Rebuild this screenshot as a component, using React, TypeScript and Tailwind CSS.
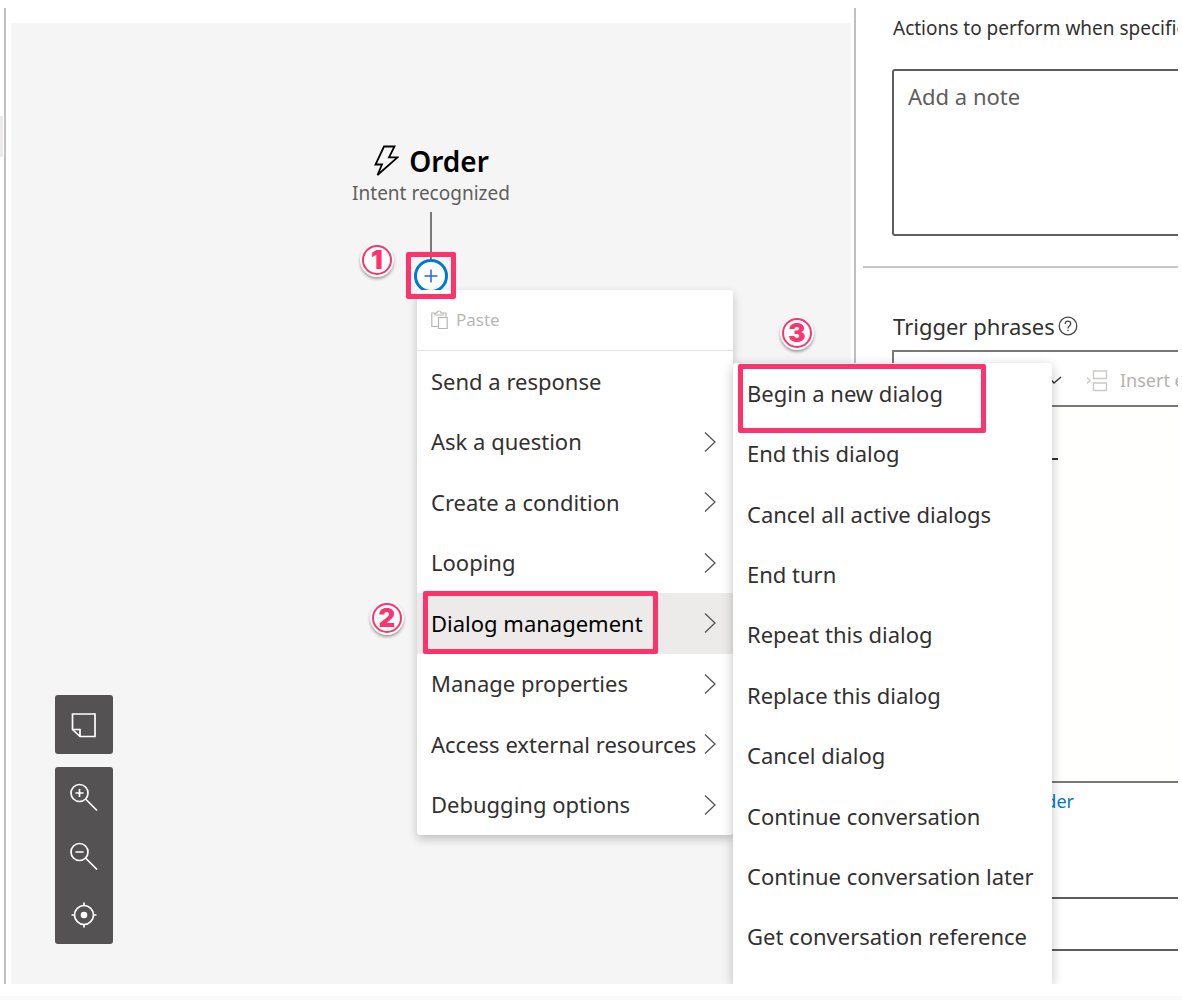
import type { ReactNode } from "react";

const menuItems: { label: string; sub?: boolean; active?: boolean }[] = [
  { label: "Send a response" },
  { label: "Ask a question", sub: true },
  { label: "Create a condition", sub: true },
  { label: "Looping", sub: true },
  { label: "Dialog management", sub: true, active: true },
  { label: "Manage properties", sub: true },
  { label: "Access external resources", sub: true },
  { label: "Debugging options", sub: true },
];

const dialogItems = [
  "Begin a new dialog",
  "End this dialog",
  "Cancel all active dialogs",
  "End turn",
  "Repeat this dialog",
  "Replace this dialog",
  "Cancel dialog",
  "Continue conversation",
  "Continue conversation later",
  "Get conversation reference",
];

function Chevron() {
  return (
    <svg className="shrink-0" width="14" height="22" viewBox="0 0 14 22" fill="none" stroke="#55534f" strokeWidth="1.3">
      <path d="M2 1.5 L12 11 L2 20.5" />
    </svg>
  );
}

function Step({ n, className }: { n: number; className: string }) {
  return (
    <div className={`absolute z-30 flex size-[34px] items-center justify-center rounded-full bg-white p-[2px] shadow-[0_2px_3px_rgba(0,0,0,0.35)] ${className}`}>
      <div className="flex size-full items-center justify-center rounded-full border-2 border-[#ff336b] font-['Inter',sans-serif] text-[26px] leading-none font-black text-[#ff336b]">
        {n}
      </div>
    </div>
  );
}

function ToolButton({ label, children }: { label: string; children: ReactNode }) {
  return (
    <button type="button" aria-label={label} className="flex h-[59px] w-full items-center justify-center">
      <svg width="30" height="30" viewBox="0 0 30 30" fill="none" stroke="#fff" strokeWidth="1.7">
        {children}
      </svg>
    </button>
  );
}

export default function App() {
  return (
    <div className="flex min-h-screen flex-col overflow-hidden bg-white font-['Noto_Sans','Segoe_UI',sans-serif] text-[#323130]">
      <main className="mt-2 mr-1 mb-3 flex flex-1 overflow-hidden">
        <div className="w-1 shrink-0 pt-[108px]">
          <div className="h-[41px] w-[3px] bg-[#edebe9]" />
        </div>
        <div className="w-[2px] shrink-0 bg-[#c0c0c0]" />

        <section aria-label="Dialog flow" className="relative z-10 mt-[15px] ml-[5px] h-[961px] min-w-[840px] flex-1 bg-[#f5f5f5]">
          <div className="absolute top-[118px] left-[320px] flex w-[200px] flex-col items-center">
            <h1 className="flex items-center gap-[10px] text-[28px] leading-10 font-semibold text-black">
              <svg width="26" height="32" viewBox="0 0 26 32" fill="none" stroke="#000" strokeWidth="1.8">
                <path d="M11 1.5 H21.5 L16 12.3 H24.5 L4.5 30 L9 19.5 H2.5 Z" />
              </svg>
              Order
            </h1>
            <p className="text-[19px] leading-6 whitespace-nowrap text-[#605e5c]">Intent recognized</p>
            <div className="mt-[7px] h-[47px] w-[2px] bg-[#7a7876]" />
            <button type="button" aria-label="Add action" className="flex size-[34px] items-center justify-center rounded-full border-3 border-[#0078d4] bg-white">
              <svg width="14" height="14" viewBox="0 0 14 14" stroke="#2266e3" strokeWidth="1.5">
                <path d="M7 0.5 V13.5 M0.5 7 H13.5" />
              </svg>
            </button>
          </div>

          <div className="absolute top-[672px] left-11 flex w-[58px] flex-col gap-[13px]">
            <div className="rounded-[3px] bg-[#545253]">
              <ToolButton label="Add note">
                <path d="M3.5 4 H26 V26.500 H11 L3.5 19.5 Z M4 19.5 H11 V26" />
              </ToolButton>
            </div>
            <div className="rounded-[3px] bg-[#545253]">
              <ToolButton label="Zoom in">
                <circle cx="10.5" cy="11" r="8.5" />
                <path d="M16.5 17 L28 28.5 M6.5 11 H14.5 M10.5 7 V15" />
              </ToolButton>
              <ToolButton label="Zoom out">
                <circle cx="10.5" cy="11" r="8.5" />
                <path d="M16.5 17 L28 28.5 M6.5 11 H14.5" />
              </ToolButton>
              <ToolButton label="Center view">
                <circle cx="15" cy="15" r="9.5" />
                <circle cx="15" cy="15" r="3.3" fill="#fff" stroke="none" />
                <path d="M15 2.5 V6 M15 24 V27.5 M2.5 15 H6 M24 15 H27.5" />
              </ToolButton>
            </div>
          </div>

          <div role="menu" aria-label="Add action" className="absolute top-[267px] left-[406px] w-[316px] rounded-[3px] bg-white shadow-[0_4px_10px_rgba(0,0,0,0.22)]">
            <button type="button" role="menuitem" disabled className="flex h-[61px] w-full items-center gap-2 border-b border-[#e1dfdd] px-[14px] text-[17px] text-[#b9b7b5]">
              <svg width="17" height="20" viewBox="0 0 17 20" fill="none" stroke="#b9b7b5" strokeWidth="1.2">
                <path d="M7 16.5 H0.8 V3 H4 M12 3 H15 V7 M4 5 V3 H6 Q6 1 8 1 Q10 1 10 3 H12 V5 Z M7.5 7.5 H16.2 V18.5 H7.5 Z" />
              </svg>
              Paste
            </button>
            <div className="flex h-[484px] flex-col">
              {menuItems.map((item) => (
                <button
                  key={item.label}
                  type="button"
                  role="menuitem"
                  className={`flex w-full flex-1 items-center justify-between pr-4 pl-[14px] text-[22px] whitespace-nowrap ${item.active ? "bg-[#edebe9] text-black" : ""}`}
                >
                  {item.label}
                  {item.sub && <Chevron />}
                </button>
              ))}
            </div>
          </div>

          <div role="menu" aria-label="Dialog management" className="absolute top-[340px] bottom-0 left-[722px] w-[319px] rounded-t-[3px] bg-white shadow-[0_3px_12px_rgba(0,0,0,0.24)]">
            <div className="flex h-[604px] flex-col">
              {dialogItems.map((label) => (
                <button key={label} type="button" role="menuitem" className="flex w-full flex-1 items-center px-[14px] text-[22px] whitespace-nowrap">
                  {label}
                </button>
              ))}
            </div>
          </div>

          <div className="absolute top-[229px] left-[395px] z-20 h-[47px] w-[50px] rounded-[2px] border-5 border-[#ff336b]" />
          <div className="absolute top-[568px] left-[412px] z-20 h-[63px] w-[235px] rounded-[2px] border-5 border-[#ff336b]" />
          <div className="absolute top-[341px] left-[727px] z-20 h-[69px] w-[248px] rounded-[2px] border-5 border-[#ff336b]" />
          <Step n={1} className="top-[220px] left-[349px]" />
          <Step n={2} className="top-[578px] left-[359px]" />
          <Step n={3} className="top-[293px] left-[769px]" />
        </section>

        <aside className="ml-[3px] w-[324px] shrink-0 overflow-hidden border-l-2 border-[#c0c0c0]">
          <p className="mt-1 ml-[37px] text-[19px] leading-8 whitespace-nowrap">Actions to perform when specified phrases</p>
          <textarea
            aria-label="Note"
            placeholder="Add a note"
            className="mt-[25px] ml-[36px] block h-[167px] w-[400px] resize-none rounded-[3px] border-2 border-[#605e5c] px-[14px] py-[9px] text-[22px] leading-8 placeholder:text-[#605e5c]"
          />
          <hr className="mt-[30px] ml-[7px] border-t-2 border-[#c8c6c4]" />
          <h2 className="mt-[42px] ml-[37px] flex items-center gap-[3px] text-[22px] leading-8">
            Trigger phrases
            <svg width="20" height="20" viewBox="0 0 20 20" fill="none" stroke="#484644" strokeWidth="1.3">
              <circle cx="10" cy="10" r="8.8" />
              <path d="M7.3 8 Q7.3 5.2 10 5.2 Q12.7 5.2 12.7 7.8 Q12.7 9 11.3 10 Q10 11 10 12.5 M10 13.8 V15.3" />
            </svg>
          </h2>
          <div className="mt-2 ml-[36px] h-[433px] w-[400px] border-2 border-[#7a7876] bg-[#fffffd]">
            <div className="flex h-[55px] items-center border-b-2 border-[#7a7876] bg-white pt-1 pl-[155px] whitespace-nowrap text-[#b3b1af]">
              <svg width="13" height="10" viewBox="0 0 13 10" fill="none" stroke="#323130" strokeWidth="1.3">
                <path d="M0.5 2 L5 7 L12 1" />
              </svg>
              <button type="button" disabled className="ml-6 flex items-center gap-3 text-[18px]">
                <svg width="22" height="22" viewBox="0 0 22 22" fill="none" stroke="#cccac8" strokeWidth="1.4">
                  <path d="M7.5 1 H20.5 V8.5 H7.5 Z M7.5 13 H20.5 V20.5 H7.5 Z M1 7.5 L4 10.5 L1 13.5" />
                </svg>
                Insert entity
              </button>
            </div>
            <div aria-hidden="true" className="mt-[51px] ml-[153px] h-[2px] w-[11px] bg-[#323130]" />
          </div>
          <a href="#order" className="mt-[2px] ml-[37px] block w-[181px] text-right text-[18px] leading-8 text-[#0078d4]">
            Order
          </a>
          <input aria-label="Condition" className="mt-20 ml-[36px] block h-[54px] w-[400px] border-2 border-[#605e5c] px-3 text-[20px]" />
        </aside>
      </main>
      <div className="h-1 bg-[#f8f9fa]" />
    </div>
  );
}
